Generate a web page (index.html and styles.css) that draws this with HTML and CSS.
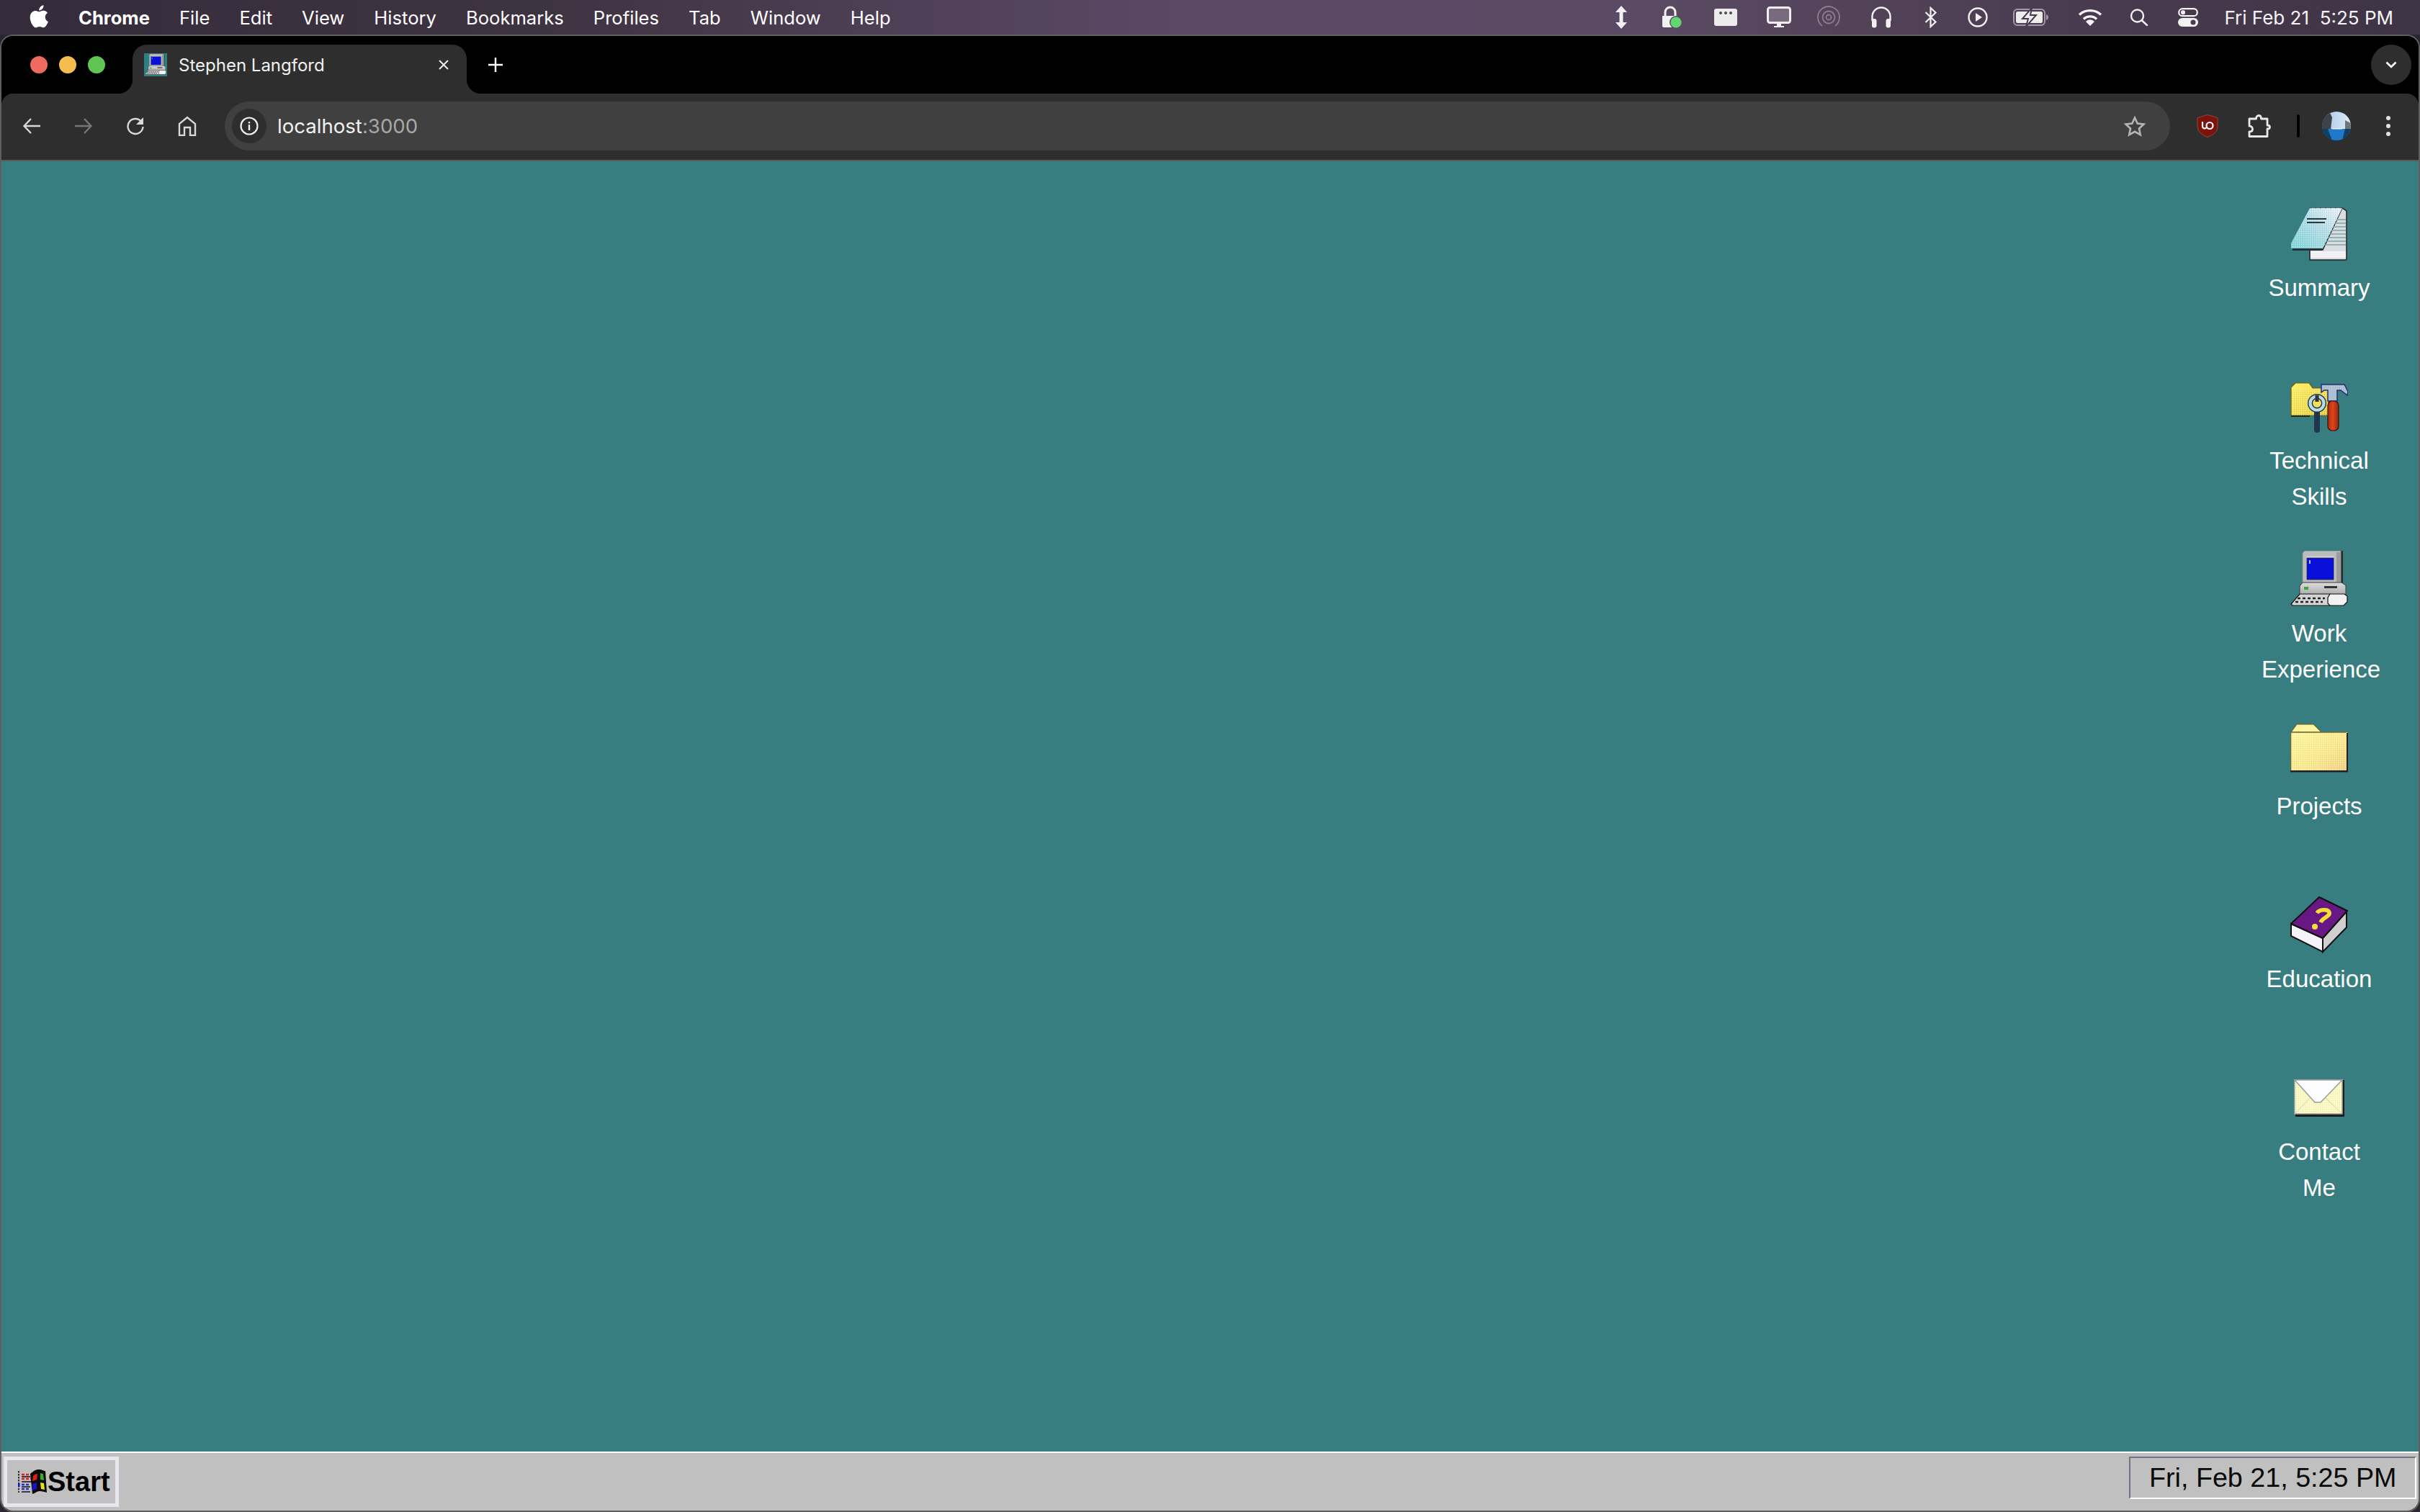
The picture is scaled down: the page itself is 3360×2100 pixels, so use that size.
FILE: index.html
```html
<!DOCTYPE html>
<html lang="en">
<head>
<meta charset="utf-8">
<title>Stephen Langford</title>
<link rel="stylesheet" href="styles.css">
</head>
<body>
<header class="menubar">
  <nav class="menus">
    <svg class="apple" viewBox="3.6 1.8 17 20.6"><path fill="#fff" d="M18.71 19.5c-.83 1.24-1.71 2.45-3.05 2.47-1.34.03-1.77-.79-3.29-.79-1.53 0-2 .77-3.27.82-1.31.05-2.3-1.32-3.14-2.53C4.25 17 2.94 12.45 4.7 9.39c.87-1.52 2.43-2.48 4.12-2.51 1.28-.02 2.5.87 3.29.87.78 0 2.26-1.07 3.81-.91.65.03 2.47.26 3.64 1.98-.09.06-2.17 1.28-2.15 3.81.03 3.02 2.65 4.03 2.68 4.04-.03.07-.42 1.44-1.38 2.83M13 3.5c.73-.83 1.94-1.46 2.94-1.5.13 1.17-.34 2.35-1.04 3.19-.69.85-1.83 1.51-2.95 1.42-.15-1.15.41-2.35 1.05-3.11z"/></svg>
    <span class="menu-app">Chrome</span><span>File</span><span>Edit</span><span>View</span><span>History</span><span>Bookmarks</span><span>Profiles</span><span>Tab</span><span>Window</span><span>Help</span>
  </nav>
  <div class="status">
    <svg width="20" height="32" viewBox="0 0 20 32"><polygon fill="#f2f2f2" points="10,0 18,9 12.5,9 12.5,23 18,23 10,32 2,23 7.5,23 7.5,9 2,9"/></svg>
    <svg width="30" height="32" viewBox="0 0 30 32"><path fill="none" stroke="#f2f2f2" stroke-width="3" d="M6 14V9a7 7 0 0 1 14 0v5"/><path fill="#f2f2f2" d="M2 14h21v16H4a2 2 0 0 1-2-2z"/><circle cx="21" cy="23" r="9" fill="#5a4a62"/><circle cx="21" cy="23" r="7.6" fill="#62d66f"/></svg>
    <svg width="32" height="24" viewBox="0 0 32 24"><rect y="0" width="32" height="24" rx="3" fill="#ececec"/><circle cx="9" cy="6" r="2" fill="#544458"/><circle cx="16" cy="6" r="2" fill="#544458"/><circle cx="23" cy="6" r="2" fill="#544458"/></svg>
    <svg width="34" height="30" viewBox="0 0 34 30"><rect x="1.500" y="1.500" width="31" height="21" rx="3" fill="#7a6a80" stroke="#efefef" stroke-width="3"/><path fill="#efefef" d="M14 24h6v3h4v2H10v-2h4z"/></svg>
    <svg width="32" height="32" viewBox="0 0 32 32" fill="none" stroke="#8b7d90" stroke-width="1.800"><circle cx="16" cy="16" r="3.500"/><circle cx="16" cy="16" r="8.500"/><path d="M7 28a15 15 0 1 1 18 0"/></svg>
    <svg width="30" height="30" viewBox="0 0 30 30"><path fill="none" stroke="#f2f2f2" stroke-width="2.400" d="M2.500 20v-6a12.500 12.500 0 0 1 25 0v6"/><rect x="2" y="17" width="6.500" height="12.500" rx="3" fill="#f2f2f2"/><rect x="21.500" y="17" width="6.500" height="12.500" rx="3" fill="#f2f2f2"/></svg>
    <svg width="18" height="30" viewBox="0 0 18 30"><path fill="none" stroke="#f2f2f2" stroke-width="2.200" d="M1.500 8 15.500 21.500 8.500 28V2l7 6.500L1.500 22"/></svg>
    <svg width="28" height="28" viewBox="0 0 28 28"><circle cx="14" cy="14" r="12.500" fill="none" stroke="#f2f2f2" stroke-width="2.400"/><polygon fill="#f2f2f2" points="11,8 20,14 11,20"/></svg>
    <svg width="50" height="24" viewBox="0 0 50 24"><rect x="1" y="1" width="43" height="22" rx="5" fill="none" stroke="#a498a8" stroke-width="2"/><rect x="4" y="4" width="37" height="16" rx="2.500" fill="#ececec"/><path fill="#ececec" stroke="#463a4c" stroke-width="2" d="M26 -1 13 14h8l-3 11 14-16h-8z"/><path fill="#a498a8" d="M46 8c2 .5 3 2 3 4s-1 3.500-3 4z"/></svg>
    <svg width="34" height="24" viewBox="0 0 34 24" fill="none" stroke="#f5f5f5" stroke-width="3.400"><path d="M2 8.500a22 22 0 0 1 30 0"/><path d="M8 14.500a13 13 0 0 1 18 0"/><path fill="#f5f5f5" stroke="none" d="M17 24l-6-6a8 8 0 0 1 12 0z"/></svg>
    <svg width="26" height="24" viewBox="0 0 26 24" fill="none" stroke="#f2f2f2" stroke-width="2.400"><circle cx="10.500" cy="10" r="8.500"/><path stroke-linecap="round" d="m17 16.500 7 6.500"/></svg>
    <svg width="28" height="26" viewBox="0 0 28 26"><rect x="1.200" y="1.200" width="25.600" height="10" rx="5" fill="none" stroke="#f2f2f2" stroke-width="2.200"/><circle cx="7" cy="6.200" r="3" fill="#f2f2f2"/><rect y="14" width="28" height="12" rx="6" fill="#f2f2f2"/><circle cx="21" cy="20" r="3.500" fill="#4a3c4e"/></svg>
    <time class="menu-time">Fri Feb 21&nbsp; 5:25 PM</time>
  </div>
</header>

<div class="window">
  <div class="tabstrip">
    <div class="lights"><i class="light red"></i><i class="light amber"></i><i class="light green"></i></div>
    <div class="tab">
      <svg class="favicon" viewBox="0 0 32 32"><rect width="32" height="32" fill="#2f7f80"/><svg x="1" y="1" width="30" height="30" viewBox="0 0 80 80"><use href="#pc"/></svg></svg>
      <span class="tab-title">Stephen Langford</span>
      <svg class="tab-close" viewBox="0 0 16 16"><path stroke="#eee" stroke-width="2" d="M2 2l12 12M14 2 2 14"/></svg>
    </div>
    <svg class="newtab" viewBox="0 0 20 20"><path stroke="#fff" stroke-width="2.400" d="M10 0v20M0 10h20"/></svg>
    <div class="tabsearch"><svg width="16" height="10" viewBox="0 0 16 10"><path fill="none" stroke="#fff" stroke-width="2.600" d="M1.500 1.500 8 8l6.500-6.500"/></svg></div>
  </div>

  <div class="toolbar">
    <div class="tool"><svg width="26" height="24" viewBox="0 0 26 24" fill="none" stroke="#d8d8d8" stroke-width="2.400"><path d="M25 12H3M12 2 2.500 12l9.500 10"/></svg></div>
    <div class="tool"><svg width="26" height="24" viewBox="0 0 26 24" fill="none" stroke="#777" stroke-width="2.400"><path d="M1 12h22M14 2l9.500 10L14 22"/></svg></div>
    <div class="tool"><svg width="26" height="26" viewBox="0 0 26 26" fill="none" stroke="#d8d8d8" stroke-width="2.400"><path d="M22 8A10.500 10.500 0 1 0 23.500 14"/><path fill="#d8d8d8" stroke="none" d="M24 1v10h-10z"/></svg></div>
    <div class="tool"><svg width="26" height="28" viewBox="0 0 26 28" fill="none" stroke="#d8d8d8" stroke-width="2.400"><path d="M2 27V11L13 2l11 9v16h-7V16H9v11z"/></svg></div>
    <div class="omnibox">
      <div class="chip"><svg width="26" height="26" viewBox="0 0 26 26"><circle cx="13" cy="13" r="11.500" fill="none" stroke="#f0f0f0" stroke-width="2.200"/><rect x="11.800" y="11" width="2.400" height="8" fill="#f0f0f0"/><rect x="11.800" y="7" width="2.400" height="2.400" fill="#f0f0f0"/></svg></div>
      <span class="url">localhost<span class="url-port">:3000</span></span>
      <svg class="star" width="32" height="30" viewBox="0 0 32 30"><path fill="none" stroke="#b4b4b4" stroke-width="2.600" d="M16 3.500l3.700 8 8.800 1-6.500 6 1.800 8.700L16 22.800l-7.800 4.400L10 18.500l-6.500-6 8.800-1z"/></svg>
    </div>
    <div class="tool"><svg width="30" height="32" viewBox="0 0 30 32"><path fill="#7d120c" stroke="#a2504a" stroke-width=".8" d="M15 .5 29 4.500v12c0 7-6 12-14 15C7 28.500 1 23.500 1 16.500v-12z"/><path fill="none" stroke="#fff" stroke-width="2.200" d="M8 10v6.500a3 3 0 0 0 5.500 1.500"/><circle cx="18" cy="15.500" r="4.500" fill="none" stroke="#fff" stroke-width="2.200"/></svg></div>
    <div class="tool"><svg width="32" height="32" viewBox="0 0 32 32"><path fill="none" stroke="#e8e8e8" stroke-width="2.800" stroke-linejoin="round" d="M2 6h9.500c0-3 1.500-4.500 3.500-4.500S18.500 3 18.500 6H27v9c2.500 0 3.500 1 3.500 2.500S29.500 20 27 20v10.500H2V24c3 0 4.500-1.500 4.500-3.500S5 16 2 16z"/></svg></div>
    <i class="tool-sep"></i>
    <div class="tool">
      <svg width="40" height="40" viewBox="0 0 40 40"><defs><clipPath id="av"><circle cx="20" cy="20" r="20"/></clipPath><linearGradient id="sky" x1="0" x2="1" y1="0" y2="0"><stop offset="0" stop-color="#5d6a6c"/><stop offset=".35" stop-color="#b9d2ec"/><stop offset="1" stop-color="#dfeaf6"/></linearGradient></defs><g clip-path="url(#av)"><rect width="40" height="24" fill="url(#sky)"/><path fill="#3e4446" d="M0 0h10l4 8-2 16H0z"/><path fill="#6d7679" d="M32 12l8 4v8h-8z"/><rect y="24" width="40" height="16" fill="#1f78c8"/><path fill="#0e3f66" d="M0 24h8l6 16H0zM32 24h8v16h-12z"/><rect x="14" y="23" width="14" height="1.500" fill="#eef"/></g></svg>
    </div>
    <div class="tool"><svg width="8" height="30" viewBox="0 0 8 30"><circle cx="4" cy="4" r="3" fill="#e2e2e2"/><circle cx="4" cy="15" r="3" fill="#e2e2e2"/><circle cx="4" cy="26" r="3" fill="#e2e2e2"/></svg></div>
  </div>

  <main class="desktop">
    <svg class="pattern-defs" width="0" height="0" aria-hidden="true"><defs>
      <pattern id="dither" width="3" height="3" patternUnits="userSpaceOnUse"><rect x="0" y="0" width="1" height="1" fill="#fff" fill-opacity=".45"/><rect x="2" y="1" width="1" height="1" fill="#000" fill-opacity=".09"/></pattern>
      <linearGradient id="cover" x1="0" y1="1" x2="1" y2="0"><stop offset="0" stop-color="#7fd6d8"/><stop offset=".55" stop-color="#b4dde8"/><stop offset="1" stop-color="#eef2fb"/></linearGradient>
      <linearGradient id="yfolder" x1="0" y1="0" x2="1" y2="1"><stop offset="0" stop-color="#fff9a0"/><stop offset=".6" stop-color="#fbe88e"/><stop offset="1" stop-color="#f2cf88"/></linearGradient>
      <linearGradient id="sfolder" x1="0" y1="0" x2="1" y2="1"><stop offset="0" stop-color="#fff26a"/><stop offset="1" stop-color="#e8cf45"/></linearGradient>
      <linearGradient id="steel" x1="0" y1="0" x2="1" y2="0"><stop offset="0" stop-color="#7fb6d0"/><stop offset=".5" stop-color="#e8f4f4"/><stop offset="1" stop-color="#5f92b4"/></linearGradient>
      <linearGradient id="handle" x1="0" y1="0" x2="1" y2="0"><stop offset="0" stop-color="#a53012"/><stop offset=".45" stop-color="#e2431c"/><stop offset="1" stop-color="#8e2a10"/></linearGradient>
      <linearGradient id="grayv" x1="0" y1="0" x2="0" y2="1"><stop offset="0" stop-color="#dcdcdc"/><stop offset="1" stop-color="#a9a9a9"/></linearGradient>
    </defs></svg>

    <div class="icon">
      <svg class="icon-art" viewBox="0 0 80 80">
        <path fill="#d8dde2" stroke="#222" stroke-width="1.500" d="M72 4l6 4v67l-1 1H27V62h18z"/>
        <path stroke="#7fa3a3" stroke-width="1.500" d="M50 20h27M48 25h29M46 30h31M44 35h33M42 40h35M40 45h37M38 50h39M36 55h41"/>
        <path fill="#f2f2f4" d="M28 64h49v9H28z"/>
        <path fill="#25303a" d="M2 55l43 0-1 8H3z"/>
        <path fill="url(#cover)" d="M27 4h45L45 60H1V53z"/>
        <path fill="url(#dither)" d="M27 4h45L45 60H1V53z"/>
        <path stroke="#555" stroke-width="1.500" stroke-dasharray="2 5" d="M27 3.500h45"/>
        <path stroke="#2c3a44" stroke-width="1.800" d="M23 19h27M23 24h25"/>
      </svg>
      <span class="icon-label">Summary</span>
    </div>

    <div class="icon">
      <svg class="icon-art" viewBox="0 0 80 80">
        <path fill="url(#sfolder)" stroke="#6b5c10" stroke-width="1.200" d="M1 52V13l6-6h19l5 7h22v38z"/>
        <path fill="url(#dither)" d="M1 52V15h52v37z"/>
        <path fill="#2a2a10" d="M1 52h26v2H1z"/>
        <path fill="#b0bed2" stroke="#1f2f70" stroke-width="1.500" d="M43 9h32l5 10-1 5-9-7h-5v15H52V17h-5l-4 3z"/>
        <path fill="url(#dither)" d="M52 10h23l4 9-9-3H52z"/>
        <rect x="52" y="32" width="15" height="41" rx="6" fill="url(#handle)" stroke="#3a1206" stroke-width="1.200"/>
        <path fill="none" stroke="#1f3550" stroke-width="8" d="M37 46v26" stroke-linecap="round"/>
        <path fill="none" stroke="url(#steel)" stroke-width="5.500" d="M37 46v26" stroke-linecap="round"/>
        <circle cx="37" cy="35" r="9.500" fill="none" stroke="#1f3550" stroke-width="7"/>
        <circle cx="37" cy="35" r="9.500" fill="none" stroke="#b9dce6" stroke-width="4.200"/>
        <circle cx="37" cy="35" r="5" fill="#f0e260"/>
        <path fill="#333" d="M34.500 24h5v9h-5z"/>
      </svg>
      <span class="icon-label">Technical Skills</span>
    </div>

    <div class="icon">
      <svg class="icon-art" viewBox="0 0 80 80">
        <g id="pc">
          <path fill="#2a2a2a" d="M70 0h3v47h-3z"/>
          <path fill="#bcbcbc" stroke="#8a8a8a" d="M20 0h50v46H17V3z"/>
          <path fill="#9b9b9b" d="M64 2h6v44h-6z"/>
          <rect x="22" y="8" width="39" height="33" fill="#e0e0e0"/>
          <rect x="23" y="10" width="37" height="30" fill="#0a10dc" stroke="#22224a"/>
          <rect x="26" y="13" width="2" height="5" fill="#9fc0ff"/>
          <path fill="url(#grayv)" stroke="#3a3a3a" d="M17 44h54l6 4v14H13V49z"/>
          <rect x="19" y="50" width="6" height="4" fill="#3fa33f"/>
          <rect x="47" y="49" width="18" height="3" fill="#333"/>
          <path fill="#d4d4d4" stroke="#111" stroke-width="1.200" d="M13 60h42v16H3L1 74z"/>
          <path stroke="#222" stroke-width="2.600" stroke-dasharray="4 3" d="M10 66h38M7 71h38"/>
          <path fill="#f2f2f2" stroke="#111" stroke-width="1.200" d="M55 60h20l4 3v8l-5 5H55l-3-3v-8z"/>
        </g>
      </svg>
      <span class="icon-label">Work Experience</span>
    </div>

    <div class="icon">
      <svg class="icon-art" viewBox="0 0 80 80">
        <path fill="#fff3a0" stroke="#6b6020" d="M1 12 9 1h23l11 11z"/>
        <rect x="0.500" y="12" width="78.500" height="55" fill="url(#yfolder)"/>
        <rect x="0.500" y="12" width="78.500" height="55" fill="url(#dither)"/>
        <path fill="none" stroke="#6d6836" stroke-width="1.300" d="M0.600 67V12h77"/>
        <path fill="#222" d="M0 65h80v2.500H0zM78 13h2v54h-2z"/>
      </svg>
      <span class="icon-label">Projects</span>
    </div>

    <div class="icon">
      <svg class="icon-art" viewBox="0 0 80 80">
        <path fill="#f4f4fa" stroke="#111" stroke-width="2" d="M1 38v17l44 22V58z"/>
        <path fill="#cfcfcf" stroke="#111" stroke-width="2" d="M45 58v19l33-34V21z"/>
        <path fill="#6a1786" stroke="#111" stroke-width="2" d="M40 1 79 20 45 58 1 38z"/>
        <path fill="none" stroke="#f4df30" stroke-width="5.500" d="M37 23c3-5 15-6 17-1 2 6-9 7-12 14"/>
        <circle cx="34" cy="42" r="4" fill="#f4df30"/>
      </svg>
      <span class="icon-label">Education</span>
    </div>

    <div class="icon">
      <svg class="icon-art" viewBox="0 0 80 80">
        <rect x="7" y="15" width="68" height="51" fill="#1d1d1d"/>
        <rect x="6" y="15" width="66" height="47" fill="#fbfac2" stroke="#a8a8a0" stroke-width="1.500"/>
        <rect x="6" y="15" width="66" height="47" fill="url(#dither)"/>
        <path fill="#fdfcff" stroke="#9b9b9b" stroke-width="1.500" d="M6 15h66L42 46h-8z"/>
        <path fill="none" stroke="#cfd0b8" stroke-width="1" d="M7 61 27 40M71 61 49 40"/>
      </svg>
      <span class="icon-label">Contact Me</span>
    </div>
  </main>

  <footer class="taskbar">
    <button class="start">
      <svg class="start-logo" viewBox="0 0 40 36">
        <path stroke="#000" stroke-width="1.500" stroke-dasharray="2.500 1.500" d="M1 3v30"/>
        <rect x="0" y="20" width="2.500" height="5" fill="#1010e0"/>
        <path stroke="#e02020" stroke-width="2.500" stroke-dasharray="4 2" d="M5 8h14M5 14h14"/>
        <path stroke="#2030d0" stroke-width="2.500" stroke-dasharray="4 2" d="M5 22h12M5 28h12"/>
        <path stroke="#111" stroke-width="1.500" d="M5 11h12M5 18h14M5 25h12M5 32h12"/>
        <path fill="#0c0c0c" d="M17 7c5-4 7-6 12-6s6 2 9 2l2 30c-4-1-6-2-10-2s-6 3-10 4z"/>
        <path fill="#e02018" d="M21 10c2-2 4-3 6-3l-1 8-6 2z"/>
        <path fill="#30b030" d="M31 6c1 0 3 1 4 1l1 9-5-1z"/>
        <path fill="#1414d0" d="M20 21l6-2v9l-6 2z"/>
        <path fill="#e8e020" d="M31 19l5 1 1 9-5-1z"/>
      </svg>
      <span class="start-text">Start</span>
    </button>
    <time class="clock">Fri, Feb 21, 5:25 PM</time>
  </footer>
</div>
</body>
</html>
```
FILE: styles.css
```css
* { box-sizing: border-box; }
html, body { margin: 0; height: 100%; }
body {
  width: 3360px;
  height: 2100px;
  overflow: hidden;
  display: flex;
  flex-direction: column;
  background: #2a2530;
  font-family: Inter, "Liberation Sans", sans-serif;
}

/* macOS menu bar */
.menubar {
  height: 48px;
  flex: none;
  display: flex;
  justify-content: space-between;
  align-items: center;
  color: #fff;
  background: linear-gradient(90deg, #352c3b 0%, #3e3341 22%, #5b4a67 50%, #5a4a63 68%, #4a3c50 85%, #3f3346 100%);
}
.menus {
  display: flex;
  align-items: center;
  gap: 41px;
  padding-left: 41px;
  font-size: 25.6px;
  font-weight: 400;
}
.apple { width: 27px; height: 32px; margin-top: -3px; }
.menu-app { font-weight: 700; }
.status {
  display: grid;
  grid-template-columns: 70px 70px 80px 68px 70px 76px 62px 68px 80px 84px 52px 84px auto;
  place-items: center;
  padding-right: 37px;
}
.status svg { display: block; }
.menu-time { font-size: 26px; white-space: nowrap; margin-left: 8px; color: #f4f4f4; }

/* Browser window */
.window {
  flex: 1;
  min-height: 0;
  display: flex;
  flex-direction: column;
  border: 2px solid #5f5f5f;
  border-radius: 18px;
  overflow: hidden;
  background: #000;
}
.tabstrip {
  height: 80px;
  flex: none;
  display: flex;
  align-items: flex-end;
  background: #000;
  padding-left: 40px;
}
.lights { display: flex; gap: 16px; align-self: center; }
.light { width: 24px; height: 24px; border-radius: 50%; }
.red { background: #ee6a5f; }
.amber { background: #f5bd4f; }
.green { background: #61c554; }
.tab {
  position: relative;
  width: 464px;
  height: 68px;
  margin-left: 38px;
  padding: 0 24px 12px 16px;
  display: flex;
  align-items: center;
  gap: 16px;
  background: #2e2e2e;
  border-radius: 20px 20px 0 0;
  color: #f0f0f0;
  font-size: 24px;
}
.tab::before, .tab::after {
  content: "";
  position: absolute;
  bottom: 0;
  width: 20px;
  height: 20px;
}
.tab::before { left: -20px; background: radial-gradient(circle at 0 0, transparent 20px, #2e2e2e 20.5px); }
.tab::after { right: -20px; background: radial-gradient(circle at 100% 0, transparent 20px, #2e2e2e 20.5px); }
.favicon { width: 32px; height: 32px; flex: none; }
.tab-title { flex: 1; white-space: nowrap; }
.tab-close { width: 16px; height: 16px; flex: none; }
.newtab { width: 20px; height: 20px; margin: 0 0 30px 30px; flex: none; }
.tabsearch {
  width: 56px;
  height: 56px;
  margin: 0 10px 12px auto;
  border-radius: 28px;
  background: #2e2e2e;
  display: flex;
  align-items: center;
  justify-content: center;
}
.toolbar {
  height: 94px;
  flex: none;
  padding: 0 6px 2px;
  display: flex;
  align-items: center;
  background: #2e2e2e;
  border-bottom: 2px solid #5a5a5a;
  border-radius: 16px 16px 0 0;
}
.tool { width: 72px; height: 72px; flex: none; display: flex; align-items: center; justify-content: center; }
.omnibox {
  flex: 1;
  height: 68px;
  margin: 0 16px;
  padding: 0 33px 0 10px;
  display: flex;
  align-items: center;
  background: #404040;
  border-radius: 34px;
}
.chip {
  width: 48px;
  height: 48px;
  border-radius: 50%;
  background: #2e2e2e;
  display: flex;
  align-items: center;
  justify-content: center;
}
.url { margin-left: 15px; font-size: 27.6px; color: #f2f2f2; }
.url-port { color: #a8a8a8; }
.star { margin-left: auto; }
.tool-sep { width: 4px; height: 32px; margin: 0 15px 0 16px; background: #000; border-radius: 2px; flex: none; }

/* Win95 desktop */
.desktop {
  flex: 1;
  min-height: 0;
  background: #387d80;
  padding: 61px 58px 0 0;
  display: flex;
  flex-direction: column;
  align-items: flex-end;
  font-family: "Liberation Sans", Arial, sans-serif;
}
.pattern-defs { position: absolute; }
.icon {
  width: 160px;
  height: 240px;
  flex: none;
  display: flex;
  flex-direction: column;
  align-items: center;
  gap: 10px;
}
.icon-art { width: 80px; height: 80px; flex: none; display: block; }
.icon-label {
  width: 160px;
  color: #fff;
  font-size: 33px;
  line-height: 50px;
  text-align: center;
}
.taskbar {
  height: 82px;
  flex: none;
  background: #c0c0c0;
  border-top: 2px solid #fff;
  padding: 5px 3px;
  display: flex;
  justify-content: space-between;
  align-items: flex-start;
  font-family: "Liberation Sans", Arial, sans-serif;
}
.start {
  width: 160px;
  height: 70px;
  padding: 0 0 0 15px;
  display: flex;
  align-items: center;
  background: #c0c0c0;
  border: 5px solid #e6e7ec;
  font: inherit;
  color: #000;
}
.start-logo { width: 40px; height: 36px; flex: none; }
.start-text { font-size: 38px; font-weight: 700; line-height: 1; margin-left: 1px; }
.clock {
  width: 399px;
  height: 59px;
  padding-left: 26px;
  display: flex;
  align-items: center;
  font-size: 37.7px;
  color: #0a0a0a;
  border: 2px solid;
  border-color: #71717f #fff #fff #71717f;
}
```
